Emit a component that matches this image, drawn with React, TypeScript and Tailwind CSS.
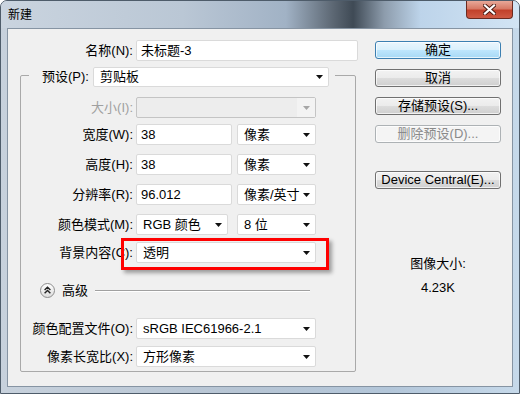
import React from "react";

// small black dropdown triangle used by every combo box
const Arrow = ({ muted }: { muted?: boolean }) => (
  <svg width="7" height="4" viewBox="0 0 7 4" className="shrink-0">
    <path d="M0 0H7L3.5 4Z" fill={muted ? "#a6a6a6" : "#111"} />
  </svg>
);

const Input = ({ w, value }: { w: string; value: string }) => (
  <div className={`${w} flex h-full items-center rounded-[2px] border border-[#dadada] bg-white pl-[4px]`}>{value}</div>
);

const Select = ({ w, value, extra = "" }: { w: string; value: string; extra?: string }) => (
  <div className={`${w} ${extra} flex h-full items-center justify-between rounded-[2px] border border-[#dadada] bg-white pl-[6px] pr-[5px]`}>
    <span className="whitespace-pre">{value}</span>
    <Arrow />
  </div>
);

function Row({ label, mt, muted, children, relative }: { label: string; mt: string; muted?: boolean; children: React.ReactNode; relative?: boolean }) {
  return (
    <div className={`flex h-[21px] items-center ${mt} ${relative ? "relative" : ""}`}>
      <span className={`w-[112px] text-right ${muted ? "text-[#a0a0a0]" : "text-black"}`}>{label}</span>
      <div className="ml-[3px] flex h-full">{children}</div>
    </div>
  );
}

function Button({ label, variant, mt }: { label: string; variant?: "default" | "disabled"; mt: string }) {
  const look =
    variant === "default"
      ? "border-[#3c7fb1] bg-[linear-gradient(to_bottom,#eaf6fd_0%,#d9f0fc_50%,#bee6fd_50%,#a7d9f5_100%)] text-black"
      : variant === "disabled"
      ? "border-[#adb2b5] bg-[#f4f4f4] text-[#8a8a8a]"
      : "border-[#707070] bg-[linear-gradient(to_bottom,#f2f2f2_0%,#ebebeb_50%,#dddddd_50%,#cfcfcf_100%)] text-black";
  return (
    <div className={`${mt} flex h-[18px] w-[126px] items-center justify-center rounded-[3px] border shadow-[inset_0_0_0_1px_rgba(255,255,255,0.7)] ${look}`}>
      {label}
    </div>
  );
}

export default function App() {
  return (
    <div className="flex h-[394px] w-[520px] flex-col overflow-hidden rounded-t-[7px] border border-[#4e5c6a] bg-[linear-gradient(to_right,#c7d1dc_0%,#b7c5d4_45%,#b3c6d9_75%,#c6d9ea_100%)] font-['Liberation_Sans','Noto_Sans_CJK_SC',sans-serif] text-[13px] text-black">
      {/* title bar */}
      <div className="flex h-[27px] shrink-0 items-start justify-between bg-[linear-gradient(to_right,#cad4df_0%,#bac7d5_35%,#a1b2c5_55%,#5d6874_64%,#3f4a55_68%,#8d9cac_74%,#bdd4ea_81%,#d2e4f4_100%)]">
        <span className="ml-[7px] mt-[7px] text-[12px] leading-[14px]">新建</span>
        <div className="mr-[6px] flex h-[18px] w-[47px] items-center justify-center rounded-b-[4px] border border-t-0 border-[#6b2a20] bg-[linear-gradient(to_bottom,#e8a898_0%,#d77a66_45%,#c2412b_55%,#cf5a44_100%)]">
          <svg width="13" height="11" viewBox="0 0 13 11">
            <path d="M2 1.5L11 9.5M11 1.5L2 9.5" stroke="#4a1a12" strokeWidth="4" strokeLinecap="square" />
            <path d="M2 1.5L11 9.5M11 1.5L2 9.5" stroke="#fff" strokeWidth="2.2" strokeLinecap="square" />
          </svg>
        </div>
      </div>

      {/* frame body */}
      <div className="flex flex-1 px-[6px] pb-[6px]">
        <div className="flex flex-1 border border-[#8694a3] bg-[#f0f0f0] pl-[12px]">
          {/* left column */}
          <div className="flex w-[338px] flex-col">
            <div className="mt-[11px] flex h-[21px] items-center">
              <span className="w-[113px] text-right">名称(N):</span>
              <div className="ml-[3px] flex h-full">
                <Input w="w-[222px]" value="未标题-3" />
              </div>
            </div>

            <fieldset className="mt-[6px] w-[336px] rounded-[2px] border border-[#a9a9a9] pb-[4px]">
              <legend className="ml-[8px] pl-[13px] pr-[6px]">
                <div className="flex h-[16px] items-start">
                  <span className="mt-[1px] leading-[18px]">预设(P):</span>
                  <div className="ml-[4px] flex h-[20px]">
                    <Select w="w-[236px]" value="剪贴板" />
                  </div>
                </div>
              </legend>

              <Row label="大小(I):" mt="mt-[14px]" muted>
                <div className="flex h-full w-[180px] items-center justify-end rounded-[2px] border border-[#c4c4c4] bg-[#ededed]">
                  <div className="flex h-full w-[18px] items-center justify-center bg-[#f3f3f3]">
                    <Arrow muted />
                  </div>
                </div>
              </Row>

              <Row label="宽度(W):" mt="mt-[6px]">
                <Input w="w-[96px]" value="38" />
                <Select w="w-[79px]" extra="ml-[5px]" value="像素" />
              </Row>

              <Row label="高度(H):" mt="mt-[9px]">
                <Input w="w-[96px]" value="38" />
                <Select w="w-[79px]" extra="ml-[5px]" value="像素" />
              </Row>

              <Row label="分辨率(R):" mt="mt-[9px]">
                <Input w="w-[96px]" value="96.012" />
                <Select w="w-[79px]" extra="ml-[5px]" value="像素/英寸" />
              </Row>

              <Row label="颜色模式(M):" mt="mt-[9px]">
                <Select w="w-[92px]" value="RGB 颜色" />
                <Select w="w-[79px]" extra="ml-[9px]" value="8 位" />
              </Row>

              <Row label="背景内容(C):" mt="mt-[7px]" relative>
                <Select w="w-[180px]" value="透明" />
                <div className="absolute left-[100px] top-[-4px] h-[32px] w-[208px] border-[3px] border-[#ff0000] shadow-[3px_3px_4px_rgba(0,0,0,0.35)]" />
              </Row>

              <div className="mt-[20px] flex h-[15px] items-center">
                <svg width="15" height="15" viewBox="0 0 15 15" className="ml-[19px] shrink-0">
                  <defs>
                    <linearGradient id="adv" x1="0" y1="0" x2="0" y2="1">
                      <stop offset="0" stopColor="#ffffff" />
                      <stop offset="1" stopColor="#dcdcdc" />
                    </linearGradient>
                  </defs>
                  <circle cx="7.5" cy="7.5" r="7" fill="url(#adv)" stroke="#8c8c8c" />
                  <path d="M4.6 7L7.5 4.2L10.4 7M4.6 10.2L7.5 7.4L10.4 10.2" fill="none" stroke="#222" strokeWidth="1.4" />
                </svg>
                <span className="ml-[7px]">高级</span>
                <div className="ml-[7px] h-[2px] w-[215px] border-t border-b border-t-[#a0a0a0] border-b-white" />
              </div>

              <Row label="颜色配置文件(O):" mt="mt-[20px]">
                <Select w="w-[180px]" value="sRGB IEC61966-2.1" />
              </Row>

              <Row label="像素长宽比(X):" mt="mt-[7px]">
                <Select w="w-[180px]" value="方形像素" />
              </Row>
            </fieldset>
          </div>

          {/* right column */}
          <div className="ml-[17px] flex w-[126px] flex-col items-center">
            <Button label="确定" variant="default" mt="mt-[12px]" />
            <Button label="取消" mt="mt-[10px]" />
            <Button label="存储预设(S)..." mt="mt-[10px]" />
            <Button label="删除预设(D)..." variant="disabled" mt="mt-[10px]" />
            <Button label="Device Central(E)..." mt="mt-[28px]" />
            <div className="mt-[67px] leading-[16px]">图像大小:</div>
            <div className="mt-[8px] leading-[16px]">4.23K</div>
          </div>
        </div>
      </div>
    </div>
  );
}
